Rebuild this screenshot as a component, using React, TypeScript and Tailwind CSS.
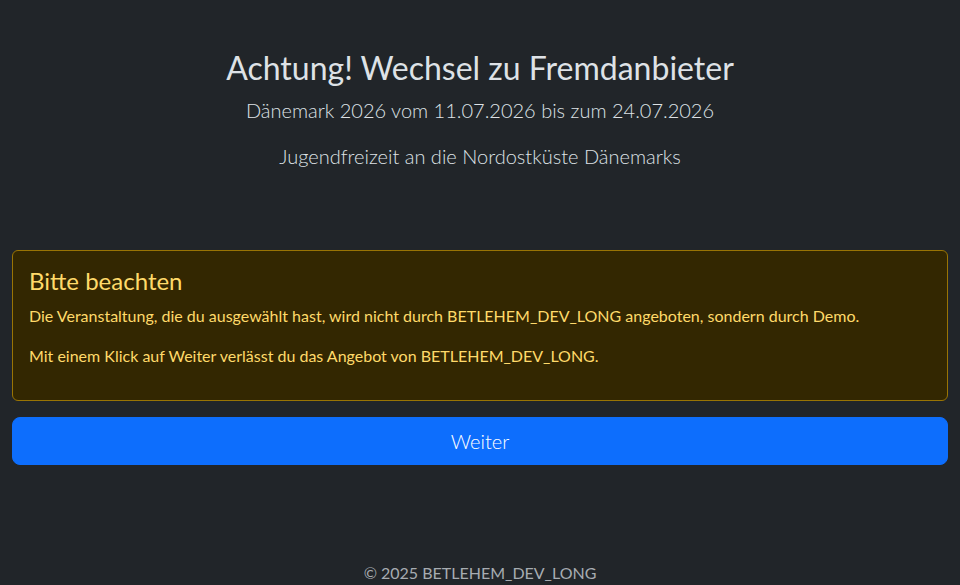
const Header = () => (
  <div className="pt-[49px] text-center">
    <h2 className="mb-2 text-[32px] leading-[1.2] font-normal">Achtung! Wechsel zu Fremdanbieter</h2>
    <p className="mb-4 text-[20px] leading-[1.5] font-light">Dänemark 2026 vom 11.07.2026 bis zum 24.07.2026</p>
    <p className="mb-4 text-[20px] leading-[1.5] font-light">Jugendfreizeit an die Nordostküste Dänemarks</p>
  </div>
);

const Notice = () => (
  <div className="mb-4 rounded-[6px] border border-[#997404] bg-[#332701] p-4 text-[#ffda6a]">
    <h4 className="mb-2 text-[24px] leading-[1.2] font-normal">Bitte beachten</h4>
    <p className="mb-4">
      Die Veranstaltung, die du ausgewählt hast, wird nicht durch BETLEHEM_DEV_LONG angeboten, sondern durch Demo.
    </p>
    <p className="mb-4">Mit einem Klick auf Weiter verlässt du das Angebot von BETLEHEM_DEV_LONG.</p>
  </div>
);

export default function App() {
  return (
    <div className="flex min-h-[585px] flex-col bg-[#212529] font-[Lato,'Noto_Sans','Liberation_Sans',sans-serif] text-[16px] leading-[1.5] text-[#dee2e6]">
      <main className="flex-1 px-3">
        <Header />
        <div className="mt-[79px]">
          <Notice />
          <button className="w-full rounded-[8px] border border-[#0d6efd] bg-[#0d6efd] px-4 py-2 text-[20px] leading-[1.5] font-light text-white">
            Weiter
          </button>
        </div>
      </main>
      <footer className="text-center text-[#a7acb1]">
        <div className="h-[24px]">© 2025 BETLEHEM_DEV_LONG</div>
      </footer>
    </div>
  );
}
